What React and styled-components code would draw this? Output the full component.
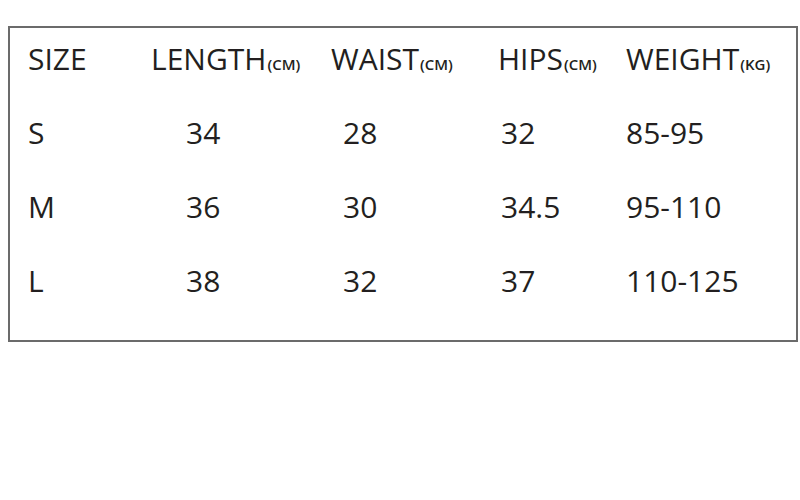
import React from 'react';
import styled, { createGlobalStyle } from 'styled-components';

const GlobalStyle = createGlobalStyle`
  html, body {
    margin: 0;
    padding: 0;
    background: #fff;
  }
  body {
    width: 800px;
    height: 500px;
    font-family: "Open Sans", "Noto Sans", sans-serif;
    color: #231f20;
  }
`

const Page = styled.div`
  padding: 26px 2px 0 8px;
`

const Chart = styled.div`
  box-sizing: border-box;
  width: 790px;
  height: 316px;
  border: 2px solid #6b6b6b;
  padding: 11px 0 0 18px;
  display: grid;
  grid-template-columns: 123px 180px 167px 128px 1fr;
  grid-auto-rows: 74px;
`

const Cell = styled.div`
  font-size: 30px;
  font-weight: 500;
  line-height: 40px;
  padding-left: ${props => props.indent || 0}px;
  white-space: nowrap;
`

const Unit = styled.span`
  font-size: 15px;
  font-weight: 600;
  margin-left: 1px;
`

const headers = [
  { label: 'SIZE' },
  { label: 'LENGTH', unit: '(CM)' },
  { label: 'WAIST', unit: '(CM)' },
  { label: 'HIPS', unit: '(CM)' },
  { label: 'WEIGHT', unit: '(KG)' },
];

const indents = [0, 35, 12, 3, 0];

const rows = [
  ['S', '34', '28', '32', '85-95'],
  ['M', '36', '30', '34.5', '95-110'],
  ['L', '38', '32', '37', '110-125'],
];

export default function App() {
  return (
    <Page>
      <GlobalStyle />
      <Chart>
        {headers.map(h => (
          <Cell key={h.label}>
            {h.label}
            {h.unit && <Unit>{h.unit}</Unit>}
          </Cell>
        ))}
        {rows.map(row =>
          row.map((value, i) => (
            <Cell key={row[0] + i} indent={indents[i]}>{value}</Cell>
          ))
        )}
      </Chart>
    </Page>
  );
}
